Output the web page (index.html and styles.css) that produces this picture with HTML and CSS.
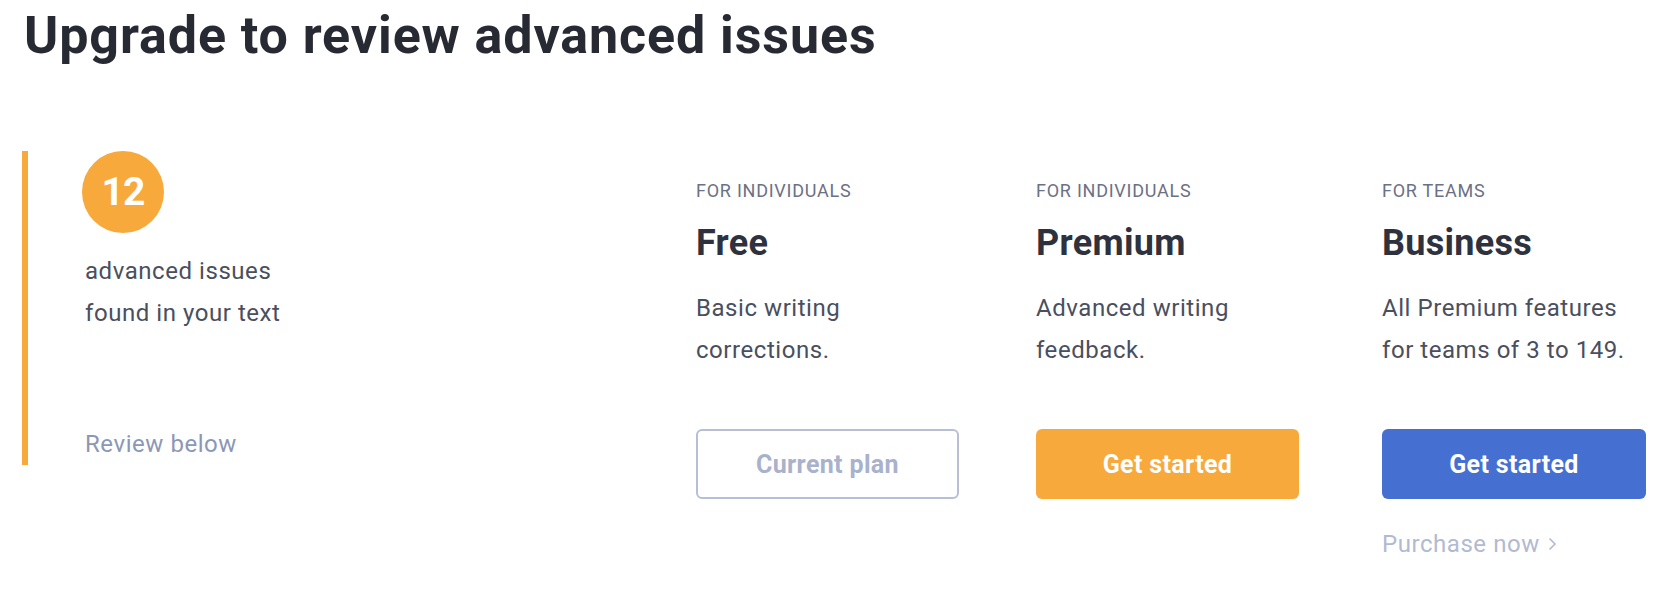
FILE: index.html
```html
<!DOCTYPE html>
<html lang="en">
<head>
<meta charset="utf-8">
<title>Upgrade to review advanced issues</title>
<link rel="stylesheet" href="styles.css">
</head>
<body>
<div class="page">
  <h1 class="title">Upgrade to review advanced issues</h1>
  <div class="plans">
    <div class="summary">
      <div class="count">12</div>
      <p class="summary-text">advanced issues<br>found in your text</p>
      <a class="review">Review below</a>
    </div>
    <div class="plan">
      <div class="audience">FOR INDIVIDUALS</div>
      <h2 class="plan-name">Free</h2>
      <p class="plan-desc">Basic writing<br>corrections.</p>
      <button class="btn btn-outline">Current plan</button>
    </div>
    <div class="plan">
      <div class="audience">FOR INDIVIDUALS</div>
      <h2 class="plan-name">Premium</h2>
      <p class="plan-desc">Advanced writing<br>feedback.</p>
      <button class="btn btn-orange">Get started</button>
    </div>
    <div class="plan">
      <div class="audience">FOR TEAMS</div>
      <h2 class="plan-name">Business</h2>
      <p class="plan-desc">All Premium features<br>for teams of 3 to 149.</p>
      <button class="btn btn-blue">Get started</button>
      <a class="purchase">Purchase now <svg class="chev" width="9" height="14" viewBox="0 0 9 14"><path d="M1.5 1.5 L7 7 L1.5 12.5" fill="none" stroke="currentColor" stroke-width="1.6"/></svg></a>
    </div>
  </div>
</div>
</body>
</html>
```

FILE: styles.css
```css
html, body {
  margin: 0;
  padding: 0;
  background: #ffffff;
}

body {
  font-family: Roboto, "Liberation Sans", Arial, sans-serif;
  color: #4a4f5e;
}

.page {
  padding: 6px 0 0 22px;
}

.title {
  margin: 0 0 0 2px;
  font-size: 52px;
  line-height: 60px;
  font-weight: 700;
  color: #272a33;
  letter-spacing: 0.9px;
}

.plans {
  display: grid;
  grid-template-columns: 674px 340px 346px 264px;
  margin-top: 85px;
}

.summary {
  border-left: 6px solid #f7a93b;
  padding-left: 54px;
  height: 314px;
  box-sizing: border-box;
  display: flex;
  flex-direction: column;
  align-items: flex-start;
}

.count {
  width: 82px;
  height: 82px;
  border-radius: 50%;
  background: #f7a93b;
  color: #ffffff;
  font-size: 39px;
  font-weight: 700;
  display: flex;
  align-items: center;
  justify-content: center;
  letter-spacing: -1px;
}

.summary-text {
  margin: 17px 0 0 3px;
  font-size: 24px;
  line-height: 42px;
  color: #4a4f5e;
  letter-spacing: 0.55px;
}

.review {
  margin: auto 0 0 3px;
  font-size: 24px;
  line-height: 42px;
  color: #8d97b5;
  letter-spacing: 0.55px;
}

.plan {
  padding-top: 28px;
  display: flex;
  flex-direction: column;
  align-items: flex-start;
}

.audience {
  font-size: 18px;
  line-height: 24px;
  color: #6b7185;
  letter-spacing: 0.75px;
}

.plan-name {
  margin: 18px 0 0;
  font-size: 36px;
  line-height: 44px;
  font-weight: 700;
  color: #2e323e;
  letter-spacing: 0.3px;
}

.plan-desc {
  margin: 22px 0 0;
  font-size: 24px;
  line-height: 42px;
  color: #4a4f5e;
  letter-spacing: 0.55px;
}

.btn {
  margin-top: 58px;
  width: 263px;
  height: 70px;
  border-radius: 6px;
  font-family: Roboto, "Liberation Sans", Arial, sans-serif;
  font-size: 25px;
  font-weight: 700;
  letter-spacing: 0.35px;
  border: 0;
  padding: 0;
  box-sizing: border-box;
}

.btn-outline {
  background: #ffffff;
  border: 2px solid #b7bfd7;
  color: #a9b2cc;
}

.btn-orange {
  background: #f7a93b;
  color: #ffffff;
}

.btn-blue {
  width: 264px;
  background: #4570d2;
  color: #ffffff;
}

.purchase {
  margin-top: 24px;
  font-size: 24px;
  line-height: 42px;
  color: #b2bad2;
  letter-spacing: 0.55px;
  display: flex;
  align-items: center;
  gap: 8px;
}

.chev {
  display: block;
}
```
